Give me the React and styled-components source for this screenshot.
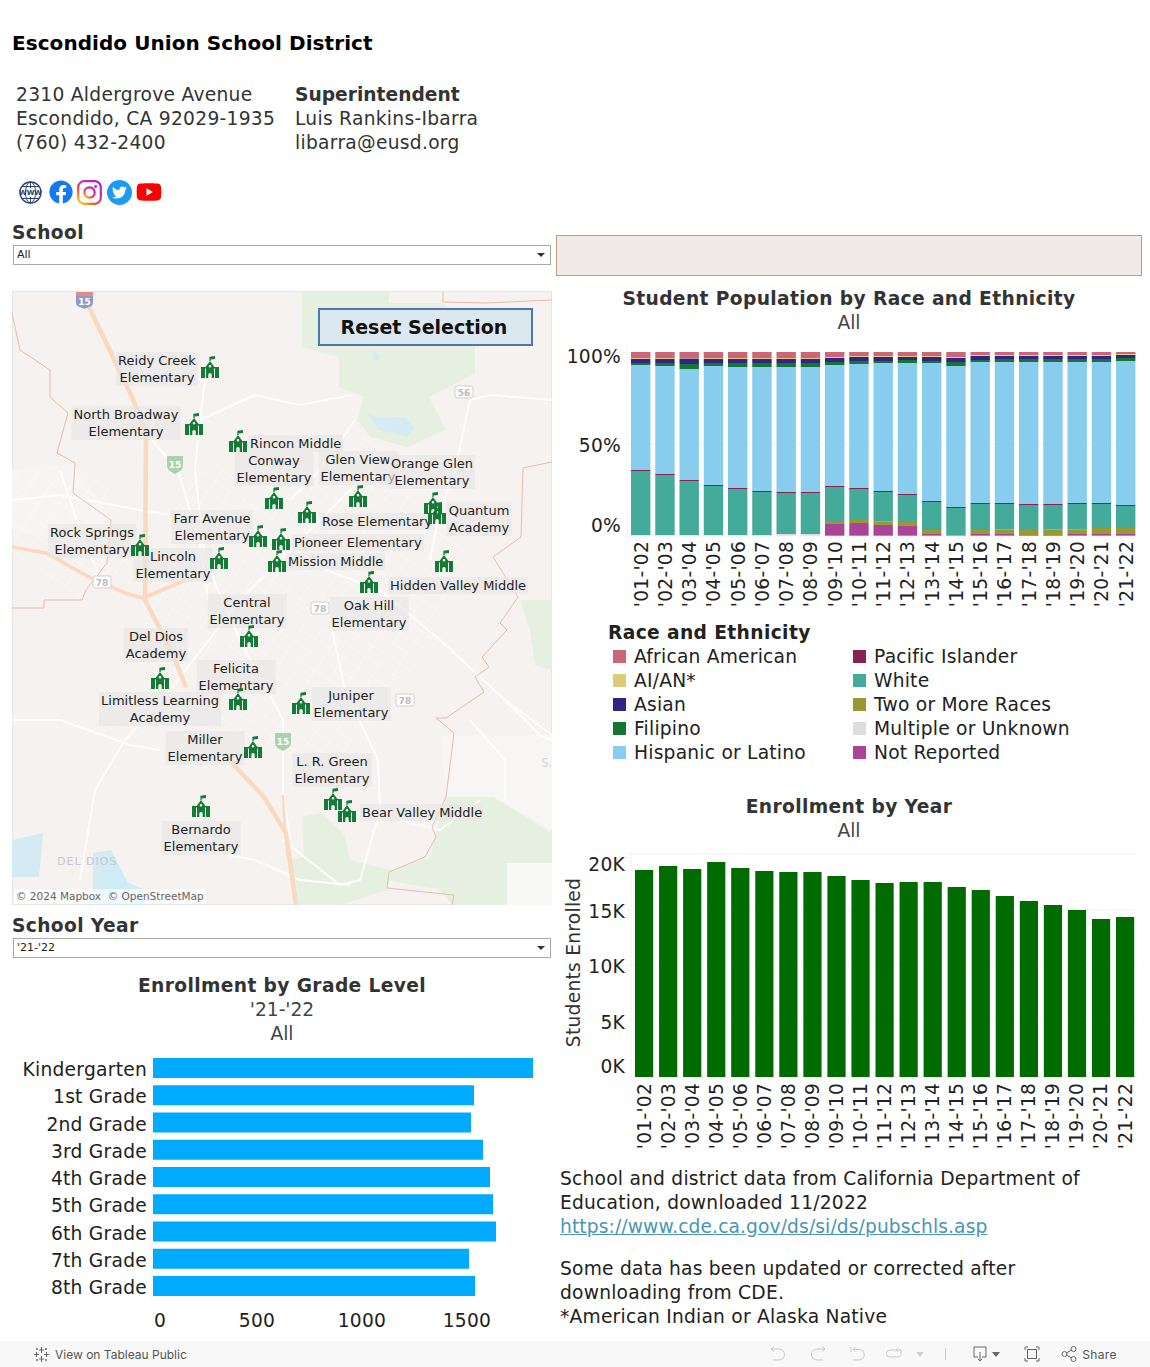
import React from "react";
import styled, { createGlobalStyle } from "styled-components";
import { FaFacebook, FaTwitter, FaYoutube } from "react-icons/fa";

const FONT = `"DejaVu Sans", Verdana, sans-serif`;

const GlobalStyle = createGlobalStyle`
  html, body { margin: 0; padding: 0; background: #fff; }
  body { font-family: ${FONT}; color: #222; }
`;

const Page = styled.div`
  width: 1150px;
  height: 1367px;
  overflow: hidden;
  display: flex;
  flex-direction: column;
`;

const Header = styled.header`
  flex: none;
  height: 220px;
  padding: 31px 12px 0;
  box-sizing: border-box;
`;

const DistrictName = styled.h1`
  margin: 0;
  font-size: 20px;
  line-height: 24px;
  letter-spacing: 0.06px;
  font-weight: 700;
  color: #000;
`;

const Contact = styled.div`
  display: flex;
  margin: 28px 0 -1px 4px;
  font-size: 18.67px;
  line-height: 24px;
  letter-spacing: 0.28px;
  color: #333;
`;

const ContactColumn = styled.div`
  width: ${(p) => p.$width || "auto"};
  b { font-weight: 700; letter-spacing: 0; }
`;

const SocialRow = styled.div`
  display: flex;
  align-items: center;
  gap: 4px;
  margin: 25px 0 0 7px;
  height: 26px;
`;

const RoundIcon = styled.span`
  width: 25px;
  height: 25px;
  border-radius: 50%;
  background: #1d9bf0;
  color: #fff;
  display: flex;
  align-items: center;
  justify-content: center;
  font-size: 15px;
`;

const Main = styled.main`
  flex: 1;
  min-height: 0;
  display: grid;
  grid-template-columns: 540px 586px;
  column-gap: 4px;
  padding-left: 12px;
  align-content: start;
`;

const Column = styled.section`
  display: flex;
  flex-direction: column;
`;

const FilterLabel = styled.div`
  font-size: 18.67px;
  line-height: 25px;
  letter-spacing: 0.36px;
  font-weight: 700;
  color: #333;
`;

const Select = styled.div`
  margin-left: 1px;
  width: 538px;
  height: 20px;
  box-sizing: border-box;
  border: 1px solid #aaa;
  display: flex;
  align-items: center;
  justify-content: space-between;
  padding: 0 5px 2px 3px;
  font-size: 11px;
  color: #222;
  &::after {
    content: "";
    margin-top: 2px;
    border-left: 4px solid transparent;
    border-right: 4px solid transparent;
    border-top: 4px solid #333;
  }
`;

const MapPane = styled.div`
  position: relative;
  margin-top: 26px;
  margin-bottom: 8px;
  width: 540px;
  height: 614px;
  overflow: hidden;
  background: #f5f2ef;
  box-shadow: inset 0 0 0 1px #e6e6e6;
`;

const MapArt = styled.svg`
  display: block;
`;

const ResetButton = styled.button`
  position: absolute;
  left: 306px;
  top: 17px;
  width: 215px;
  height: 38px;
  box-sizing: border-box;
  padding: 0 3px 0 0;
  background: #dce8ef;
  border: 2px solid #4e79a7;
  font-family: ${FONT};
  font-size: 19px;
  font-weight: 700;
  color: #111;
`;

const MapLabel = styled.div`
  position: absolute;
  left: ${(p) => p.$x}px;
  top: ${(p) => p.$y}px;
  transform: ${(p) => (p.$centered ? "translateX(-50%)" : "none")};
  padding: 0 2px;
  background: rgba(232, 230, 228, 0.6);
  font-size: 13px;
  line-height: 17px;
  color: #222;
  white-space: pre;
  text-align: center;
`;

const Pin = styled.svg`
  position: absolute;
  left: ${(p) => p.$x}px;
  top: ${(p) => p.$y}px;
`;

const Attribution = styled.div`
  position: absolute;
  left: 2px;
  bottom: 1px;
  padding: 0 2px;
  background: rgba(255, 255, 255, 0.65);
  font-size: 10.5px;
  line-height: 15px;
  color: #666;
`;

const ChartTitle = styled.h2`
  margin: ${(p) => p.$top || 0}px 0 0;
  padding-top: 1px;
  font-size: 18.67px;
  line-height: 23px;
  letter-spacing: 0.37px;
  font-weight: 700;
  color: #333;
  text-align: center;
`;

const ChartSub = styled.div`
  padding-top: 1px;
  font-size: 18.67px;
  line-height: 23px;
  color: #444;
  text-align: center;
`;

const Chart = styled.svg`
  display: block;
  flex: none;
  margin-top: ${(p) => p.$top || 0}px;
  font-family: ${FONT};
  text { letter-spacing: 0.25px; }
`;

const NoticeBox = styled.div`
  margin-top: 15px;
  height: 41px;
  box-sizing: border-box;
  background: #f0ebe8;
  border: 1px solid #bf9b82;
`;

const LegendTitle = styled.div`
  margin: 6px 0 0 52px;
  font-size: 18.67px;
  line-height: 23px;
  letter-spacing: 0.37px;
  font-weight: 700;
  color: #222;
`;

const LegendGrid = styled.div`
  display: grid;
  grid-template-rows: repeat(5, 24px);
  grid-template-columns: 240px 260px;
  grid-auto-flow: column;
  margin-left: 57px;
`;

const LegendItem = styled.div`
  display: flex;
  align-items: center;
  font-size: 18.67px;
  letter-spacing: 0.22px;
  color: #222;
  white-space: nowrap;
`;

const Swatch = styled.span`
  width: 13px;
  height: 13px;
  margin-right: ${(p) => p.$gap}px;
  background: ${(p) => p.$color};
`;

const Notes = styled.div`
  margin: 12px 0 0 4px;
  font-size: 18.67px;
  line-height: 24px;
  letter-spacing: 0.22px;
  color: #222;
  white-space: nowrap;
  p { margin: 0 0 18px; }
  a { color: #4a96b4; letter-spacing: 0.11px; }
`;

const Toolbar = styled.footer`
  flex: none;
  height: 26px;
  background: #f8f8f8;
  display: flex;
  align-items: center;
  justify-content: space-between;
  padding: 0 33px;
  font-family: Inter, "Open Sans", sans-serif;
  font-size: 12px;
  color: #555;
`;

const ToolGroup = styled.div`
  display: flex;
  align-items: center;
  gap: ${(p) => p.$gap ?? 6}px;
`;

const ToolSet = styled(ToolGroup)`
  letter-spacing: 0.4px;
  svg { display: block; }
`;

const Spacer = styled.span`
  width: ${(p) => p.$w}px;
`;

const YEARS = ["01", "02", "03", "04", "05", "06", "07", "08", "09", "10", "11", "12", "13", "14", "15", "16", "17", "18", "19", "20", "21"].map(
  (y) => `'${y}-'${String(+y + 1).padStart(2, "0")}`
);

const RACE_COLORS = ["#CC6677", "#DDCC77", "#332288", "#117733", "#88CCEE", "#882255", "#44AA99", "#999933", "#DDDDDD", "#AA4499"];

// lower edge of each stack segment, measured off the reference in 3x pixels from y=340
const RACE_EDGES = [
  [55, 57, 69, 75, 390, 393, 585, 585, 587, 587],
  [54, 57, 69, 78, 402, 405, 585, 585, 587, 587],
  [54, 56, 72, 87, 420, 423, 585, 585, 587, 587],
  [54, 57, 69, 78, 435, 438, 585, 585, 587, 587],
  [54, 57, 69, 81, 444, 447, 585, 585, 587, 587],
  [54, 57, 69, 81, 453, 456, 585, 585, 587, 587],
  [54, 57, 69, 81, 456, 459, 582, 582, 587, 587],
  [54, 57, 69, 81, 456, 459, 582, 582, 587, 587],
  [51, 54, 66, 75, 438, 441, 546, 552, 552, 587],
  [48, 51, 63, 72, 444, 447, 540, 549, 549, 587],
  [48, 51, 63, 69, 453, 456, 544, 555, 555, 587],
  [48, 51, 60, 69, 462, 465, 546, 558, 558, 587],
  [48, 51, 63, 69, 483, 486, 570, 582, 582, 587],
  [51, 54, 66, 78, 501, 504, 585, 587, 587, 587],
  [46, 48, 60, 66, 489, 492, 570, 582, 582, 587],
  [46, 48, 57, 66, 489, 492, 568, 582, 582, 587],
  [46, 48, 57, 66, 492, 495, 570, 585, 585, 587],
  [46, 48, 57, 66, 492, 495, 568, 585, 585, 587],
  [46, 48, 57, 66, 489, 492, 568, 582, 582, 587],
  [46, 48, 57, 66, 489, 492, 564, 582, 582, 587],
  [43, 45, 54, 63, 495, 498, 564, 582, 582, 587],
];

const ENROLL_TOPS = [90, 78, 87, 66, 84, 93, 96, 96, 108, 120, 129, 126, 126, 141, 150, 168, 183, 195, 210, 237, 231];

const LEGEND = [
  "African American", "AI/AN*", "Asian", "Filipino", "Hispanic or Latino",
  "Pacific Islander", "White", "Two or More Races", "Multiple or Unknown", "Not Reported",
];

const GRADES = [
  ["Kindergarten", 533], ["1st Grade", 474], ["2nd Grade", 471], ["3rd Grade", 483], ["4th Grade", 490],
  ["5th Grade", 493], ["6th Grade", 496], ["7th Grade", 469], ["8th Grade", 475],
];

// page coordinates; cx = centred label, lx = left edge of a one line label
const LABELS = [
  { text: "Reidy Creek\nElementary", cx: 157, y: 360 },
  { text: "North Broadway\nElementary", cx: 126, y: 414 },
  { text: "Rincon Middle", lx: 248, y: 443 },
  { text: "Conway\nElementary", cx: 274, y: 460 },
  { text: "Glen View\nElementary", cx: 358, y: 459 },
  { text: "Orange Glen\nElementary", cx: 432, y: 463 },
  { text: "Quantum\nAcademy", cx: 479, y: 510 },
  { text: "Farr Avenue\nElementary", cx: 212, y: 518 },
  { text: "Rose Elementary", lx: 320, y: 521 },
  { text: "Rock Springs\nElementary", cx: 92, y: 532 },
  { text: "Pioneer Elementary", lx: 292, y: 542 },
  { text: "Lincoln\nElementary", cx: 173, y: 556 },
  { text: "Mission Middle", lx: 286, y: 561 },
  { text: "Hidden Valley Middle", lx: 388, y: 585 },
  { text: "Central\nElementary", cx: 247, y: 602 },
  { text: "Oak Hill\nElementary", cx: 369, y: 605 },
  { text: "Del Dios\nAcademy", cx: 156, y: 636 },
  { text: "Felicita\nElementary", cx: 236, y: 668 },
  { text: "Limitless Learning\nAcademy", cx: 160, y: 700 },
  { text: "Juniper\nElementary", cx: 351, y: 695 },
  { text: "Miller\nElementary", cx: 205, y: 739 },
  { text: "L. R. Green\nElementary", cx: 332, y: 761 },
  { text: "Bear Valley Middle", lx: 360, y: 812 },
  { text: "Bernardo\nElementary", cx: 201, y: 829 },
];

const PINS = [
  [210, 367], [194, 424], [238, 441], [274, 498], [358, 496], [433, 503], [437, 513], [258, 536],
  [307, 512], [140, 545], [281, 539], [219, 558], [277, 561], [444, 561], [369, 582], [249, 636],
  [160, 678], [238, 699], [301, 703], [253, 747], [333, 799], [347, 811], [201, 806],
];

const SHIELDS = [[102, 582, "78"], [320, 608, "78"], [405, 700, "78"], [464, 392, "56"]];

const WHITE_ROADS = [
  "M146 433 L178 470 L200 545 L208 600",
  "M205 380 L200 420 L195 470 L205 560 L240 640 L283 720 L283 790 L290 840",
  "M12 500 L60 495 L140 510 L205 520 L300 560 L380 590 L440 640 L505 700 L552 735",
  "M380 460 L350 490 L300 540 L240 600 L170 690 L125 740 L95 790 L80 880",
  "M200 420 L255 395 L300 405 L352 395",
  "M552 400 L490 395 L470 400 L455 470 L440 510 L430 560",
  "M355 420 L320 470 L290 500",
  "M12 720 L60 720 L130 745 L160 750",
  "M283 840 L340 885 L360 880 L380 810 L378 760 L345 690 L330 620",
  "M200 850 L255 860 L300 880 L350 885",
  "M400 820 L440 830 L480 800",
  "M505 700 L540 735 L552 740",
  "M470 720 L505 760 L505 800",
  "M60 470 L85 545 L100 575",
];

const BORDERS = [
  "M12 313 L20 350 L50 370 L50 397 L68 413 L57 453 L75 463 L73 493 L111 520 L107 563 L86 590 L82 600 L44 600 L44 608 L12 608",
  "M443 292 L443 302 L486 303 L552 300",
  "M552 462 L523 468 L521 537 L493 557 L518 597 L500 623 L507 630 L482 657 L489 667 L475 677 L484 692 L446 718 L436 718 L454 733 L446 797 L432 827 L436 837 L425 857 L389 872 L387 888 L454 895 L452 905",
];

const GREENS = [
  "302,292 389,292 389,303 443,303 475,347 475,373 429,397 446,430 407,447 371,437 357,420 364,397 339,387 339,357 302,347",
  "493,797 552,833 552,863 507,863 507,905 453,905 440,890 387,880 391,870 430,858 437,830 447,797",
  "304,857 302,817 321,813 345,835 350,860 391,870 387,890 340,905 296,905 292,860",
  "520,600 552,600 552,670 535,665 530,630",
];

const WATER = [
  "368,413 378,418 404,417 414,427 407,437 379,430",
  "12,840 43,833 39,877 12,877",
  "93,853 111,850 128,883 146,890 146,905 93,905",
  "374,350 380,357 376,362 372,358",
];

const SchoolPin = ({ x, y }) => (
  <Pin $x={x - 9 - 12} $y={y - 11 - 291} width="18" height="22" viewBox="0 0 18 22" fill="#147a38">
    <path d="M8.4 0.8 L14 0 V3 L9.6 3.6 V5 H8.4 Z" />
    <path
      fillRule="evenodd"
      d="M0 11 H4.6 L9 5 L13.4 11 H18 V22 H0 Z M4 12.5 V22 H5 V12.5 Z M13 12.5 V22 H14 V12.5 Z M7.3 22 H10.7 V18.6 A1.7 1.7 0 0 0 7.3 18.6 Z M9 9 A1.3 1.3 0 1 0 9 11.6 A1.3 1.3 0 1 0 9 9 Z"
    />
  </Pin>
);

const Shield = ({ x, y, fill, text }) => (
  <g>
    <path d={`M${x - 8} ${y - 8} H${x + 8} V${y + 1} C${x + 8} ${y + 7} ${x + 3} ${y + 8} ${x} ${y + 10} C${x - 3} ${y + 8} ${x - 8} ${y + 7} ${x - 8} ${y + 1} Z`} fill={fill} />
    <text x={x} y={y + 4} textAnchor="middle" fontSize="9" fontWeight="700" fill="#fff" fontFamily={FONT}>{text}</text>
  </g>
);

const MapBackground = () => (
  <MapArt width="540" height="614" viewBox="12 291 540 614">
    <defs>
      <pattern id="streets" width="17" height="13" patternUnits="userSpaceOnUse" patternTransform="rotate(33)">
        <path d="M0 0 H17 M0 0 V13" stroke="#fff" strokeWidth="1.1" opacity="0.6" fill="none" />
      </pattern>
      <pattern id="suburb" width="14" height="16" patternUnits="userSpaceOnUse" patternTransform="rotate(-20)">
        <path d="M0 0 H14 M0 0 V16" stroke="#fff" strokeWidth="0.9" opacity="0.35" fill="none" />
      </pattern>
    </defs>
    <rect x="507" y="863" width="45" height="42" fill="#f9f9f8" />
    <polygon points="440,735 552,735 552,830 493,797 447,797" fill="#f7f6f4" />
    <polygon points="12,470 60,465 75,463 111,520 107,563 60,540 12,530" fill="#f7f5f3" />
    <polygon points="12,470 100,470 140,560 80,600 12,560" fill="url(#streets)" />
    <polygon points="190,470 400,430 470,560 430,650 340,760 250,740 170,700 140,600" fill="url(#streets)" />
    <polygon points="60,640 150,640 240,780 150,830 60,760" fill="url(#suburb)" />
    <polygon points="300,620 470,640 450,790 380,830 290,700" fill="url(#suburb)" />
    {GREENS.map((p) => <polygon key={p} points={p} fill="#e6f0e0" />)}
    {WATER.map((p) => <polygon key={p} points={p} fill="#d4ebf3" />)}
    <polygon points="100,860 114,858 132,890 108,890" fill="#cdecf7" />
    {WHITE_ROADS.map((d) => <path key={d} d={d} fill="none" stroke="#fff" strokeWidth="2" strokeLinejoin="round" opacity="0.85" />)}
    {BORDERS.map((d) => <path key={d} d={d} fill="none" stroke="#e6bda9" strokeWidth="1" />)}
    <path d="M89 307 L132 397 L146 433 L145 600 L157 623 L175 660 L186 687" fill="none" stroke="#fbd9c0" strokeWidth="4.5" />
    <path d="M231 762 L264 797 L286 833 L296 905" fill="none" stroke="#fbd9c0" strokeWidth="4.5" />
    <path d="M12 547 L46 553 L89 577 L125 593 L143 598 L186 580" fill="none" stroke="#fbd9c0" strokeWidth="3.6" />
    <path d="M283 795 L285 830 L288 860" fill="none" stroke="#fbd9c0" strokeWidth="2.4" />
    <path d="M76 294 H93 V303 C93 307 88 307 84.5 309 C81 307 76 307 76 303 Z" fill="#8e9bc7" />
    <rect x="76" y="292" width="17" height="4" fill="#e08a8a" />
    <text x="84.5" y="305" textAnchor="middle" fontSize="9" fontWeight="700" fill="#fff" fontFamily={FONT}>15</text>
    <Shield x={175} y={464} fill="#a9d3ac" text="15" />
    <Shield x={283} y={741} fill="#a9d3ac" text="15" />
    {SHIELDS.map(([x, y, t]) => (
      <g key={`${x}${y}`}>
        <rect x={x - 9} y={y - 6} width="18" height="12" rx="2" fill="#fff" stroke="#d3cfcb" />
        <text x={x} y={y + 3.5} textAnchor="middle" fontSize="9" fontWeight="700" fill="#bbb" fontFamily={FONT}>{t}</text>
      </g>
    ))}
    <text x="57" y="865" fontSize="11" letterSpacing="1" fill="#c7c6d3" fontFamily={FONT}>DEL DIOS</text>
    <text x="541" y="767" fontSize="12" fill="#d2d6df" fontFamily={FONT}>S.</text>
  </MapArt>
);

const TICK = "#222";

const RaceChart = () => (
  <Chart $top={6} width="586" height="275" viewBox="556 340 586 275">
    {[353, 444, 536].map((y) => <line key={y} x1="622" x2="1137" y1={y} y2={y} stroke="#f2f2f2" />)}
    <line x1="627" x2="627" y1="344" y2="537" stroke="#f2f2f2" />
    {[["100%", 363], ["50%", 452], ["0%", 532]].map(([t, y]) => (
      <text key={t} x="621" y={y} textAnchor="end" fontSize="18.67" fill={TICK}>{t}</text>
    ))}
    {RACE_EDGES.map((edges, i) => {
      const x = 631 + i * 24.25;
      let prev = 36;
      return (
        <g key={i}>
          {edges.map((edge, s) => {
            const rect = <rect key={s} x={x} y={340 + prev / 3} width="19.4" height={(edge - prev) / 3} fill={RACE_COLORS[s]} />;
            prev = edge;
            return rect;
          })}
          <text transform={`translate(${x + 16.5} 541) rotate(-90)`} textAnchor="end" fontSize="18.67" fill={TICK}>{YEARS[i]}</text>
        </g>
      );
    })}
  </Chart>
);

const EnrollmentChart = () => (
  <Chart $top={3} width="586" height="310" viewBox="556 845 586 310">
    {[854, 910, 965, 1021, 1077].map((y) => <line key={y} x1="628" x2="1137" y1={y} y2={y} stroke="#f2f2f2" />)}
    <line x1="631" x2="631" y1="852" y2="1080" stroke="#f2f2f2" />
    {[["20K", 871], ["15K", 918], ["10K", 973], ["5K", 1029], ["0K", 1073]].map(([t, y]) => (
      <text key={t} x="625" y={y} textAnchor="end" fontSize="18.67" fill={TICK}>{t}</text>
    ))}
    <text transform="translate(580 962.5) rotate(-90)" textAnchor="middle" fontSize="18.67" fill="#333">Students Enrolled</text>
    {ENROLL_TOPS.map((top, i) => {
      const x = 635 + i * 24.05;
      const y = 840 + top / 3;
      return (
        <g key={i}>
          <rect x={x} y={y} width="18.2" height={1077 - y} fill="#006c00" />
          <text transform={`translate(${x + 15.5} 1083) rotate(-90)`} textAnchor="end" fontSize="18.67" fill={TICK}>{YEARS[i]}</text>
        </g>
      );
    })}
  </Chart>
);

const GradeChart = () => (
  <Chart $top={5} width="540" height="285" viewBox="12 1050 540 285">
    <line x1="152" x2="152" y1="1054" y2="1300" stroke="#f2f2f2" />
    {GRADES.map(([name, right], i) => {
      const y = 1058 + i * 27.25;
      return (
        <g key={name}>
          <rect x="153" y={y} width={right - 153} height="20" fill="#00aaff" />
          <text x="147" y={y + 18} textAnchor="end" fontSize="18.67" fill={TICK}>{name}</text>
        </g>
      );
    })}
    {[["0", 160], ["500", 257], ["1000", 362], ["1500", 467]].map(([t, x]) => (
      <text key={t} x={x} y="1327" textAnchor="middle" fontSize="18.67" fill={TICK}>{t}</text>
    ))}
  </Chart>
);

const GlobeIcon = () => (
  <svg width="26" height="23" viewBox="0 0 26 23" fill="none" stroke="#2d4373" strokeWidth="1">
    <circle cx="11.5" cy="11.5" r="10.5" strokeWidth="1.3" />
    <ellipse cx="11.5" cy="11.5" rx="5" ry="10.5" />
    <path d="M3 5.5 H20 M3 17.5 H20 M11.5 1 V7 M11.5 16 V22" />
    <text x="11.5" y="14" textAnchor="middle" fontSize="7" fontWeight="700" fill="#2d4373" stroke="none" fontFamily={FONT}>WWW</text>
  </svg>
);

const InstagramIcon = () => (
  <svg width="26" height="25" viewBox="0 0 26 25" fill="none">
    <defs>
      <linearGradient id="ig" x1="0.1" y1="1" x2="0.9" y2="0">
        <stop offset="0" stopColor="#fdc70c" />
        <stop offset="0.35" stopColor="#f3463e" />
        <stop offset="0.65" stopColor="#d626a8" />
        <stop offset="1" stopColor="#a01fe8" />
      </linearGradient>
    </defs>
    <rect x="1.2" y="1.2" width="22.6" height="22.6" rx="6" stroke="url(#ig)" strokeWidth="2.2" />
    <circle cx="12.5" cy="12.5" r="5.2" stroke="url(#ig)" strokeWidth="2.2" />
    <circle cx="18.6" cy="6.4" r="1.5" fill="#d626a8" />
  </svg>
);

const Stroke = ({ children, width = 16, color = "#c9c9c9" }) => (
  <svg width={width} height="16" viewBox={`0 0 ${width} 16`} fill="none" stroke={color} strokeWidth="1">
    {children}
  </svg>
);

const Caret = ({ color }) => (
  <svg width="8" height="5" viewBox="0 0 8 5"><path d="M0 0 H8 L4 5 Z" fill={color} /></svg>
);

const TableauMark = () => (
  <svg width="17" height="17" viewBox="0 0 17 17" stroke="#666" strokeWidth="1" fill="none">
    <path d="M8.5 1 V7 M6 4 H11 M8.5 10 V16 M6 13 H11 M3.5 6 V11 M1 8.5 H6 M13.5 6 V11 M11 8.5 H16 M4 2 V4 M3 3 H5 M13 2 V4 M12 3 H14 M4 13 V15 M3 14 H5 M13 13 V15 M12 14 H14" />
  </svg>
);

const App = () => (
  <Page>
    <GlobalStyle />
    <Header>
      <DistrictName>Escondido Union School District</DistrictName>
      <Contact>
        <ContactColumn $width="279px">
          2310 Aldergrove Avenue<br />
          Escondido, CA 92029-1935<br />
          (760) 432-2400
        </ContactColumn>
        <ContactColumn>
          <b>Superintendent</b><br />
          Luis Rankins-Ibarra<br />
          libarra@eusd.org
        </ContactColumn>
      </Contact>
      <SocialRow>
        <GlobeIcon />
        <FaFacebook size={24} color="#1877f2" />
        <InstagramIcon />
        <RoundIcon><FaTwitter /></RoundIcon>
        <FaYoutube size={26} color="#fe0000" />
      </SocialRow>
    </Header>
    <Main>
      <Column>
        <FilterLabel>School</FilterLabel>
        <Select>All</Select>
        <MapPane>
          <MapBackground />
          <ResetButton>Reset Selection</ResetButton>
          {LABELS.map((l) => (
            <MapLabel key={l.text} $centered={l.cx != null} $x={(l.cx ?? l.lx) - 12} $y={l.y - 8 - 291}>{l.text}</MapLabel>
          ))}
          {PINS.map(([x, y]) => <SchoolPin key={`${x}-${y}`} x={x} y={y} />)}
          <Attribution>© 2024 Mapbox &nbsp;© OpenStreetMap</Attribution>
        </MapPane>
        <FilterLabel>School Year</FilterLabel>
        <Select>'21-'22</Select>
        <ChartTitle $top={15}>Enrollment by Grade Level</ChartTitle>
        <ChartSub>'21-'22</ChartSub>
        <ChartSub>All</ChartSub>
        <GradeChart />
      </Column>
      <Column>
        <NoticeBox />
        <ChartTitle $top={10}>Student Population by Race and Ethnicity</ChartTitle>
        <ChartSub>All</ChartSub>
        <RaceChart />
        <LegendTitle>Race and Ethnicity</LegendTitle>
        <LegendGrid>
          {LEGEND.map((name, i) => (
            <LegendItem key={name}>
              <Swatch $color={RACE_COLORS[i]} $gap={8} />
              {name}
            </LegendItem>
          ))}
        </LegendGrid>
        <ChartTitle $top={30}>Enrollment by Year</ChartTitle>
        <ChartSub>All</ChartSub>
        <EnrollmentChart />
        <Notes>
          <p>
            School and district data from California Department of<br />
            Education, downloaded 11/2022<br />
            <a href="https://www.cde.ca.gov/ds/si/ds/pubschls.asp">https://www.cde.ca.gov/ds/si/ds/pubschls.asp</a>
          </p>
          <p>
            Some data has been updated or corrected after<br />
            downloading from CDE.<br />
            *American Indian or Alaska Native
          </p>
        </Notes>
      </Column>
    </Main>
    <Toolbar>
      <ToolGroup $gap={5}>
        <TableauMark />
        View on Tableau Public
      </ToolGroup>
      <ToolSet $gap={0}>
        <Stroke><path d="M1 3 H9 A5.5 5.5 0 0 1 9 14 H3 M1 3 L4 0.5 M1 3 L4 5.5" /></Stroke>
        <Spacer $w={24} />
        <Stroke><path d="M15 3 H7 A5.5 5.5 0 0 0 7 14 H13 M15 3 L12 0.5 M15 3 L12 5.5" /></Stroke>
        <Spacer $w={24} />
        <Stroke><path d="M1 1 V6 M3 3.5 H9 A5 5 0 0 1 9 14 H3 M3 3.5 L5.5 1.5 M3 3.5 L5.5 5.5" /></Stroke>
        <Spacer $w={20} />
        <Stroke><path d="M10 4 H4 A3.5 3.5 0 0 0 4 11 H12 A3.5 3.5 0 0 0 15 7 V4 H11 M12 2 L10 4 L12 6" /></Stroke>
        <Spacer $w={14} />
        <Caret color="#d0d0d0" />
        <Spacer $w={21} />
        <Stroke width={1}><path d="M0.5 2 V14" /></Stroke>
        <Spacer $w={26} />
        <Stroke color="#666"><path d="M2 1 H14 V11 H10 M6 11 H2 V1 M8 6 V15 M6 13 L8 15 L10 13" /></Stroke>
        <Spacer $w={4} />
        <Caret color="#666" />
        <Spacer $w={24} />
        <Stroke color="#666"><path d="M1 4 V1 H4 M12 1 H15 V4 M15 12 V15 H12 M4 15 H1 V12" /><rect x="3.5" y="3.5" width="9" height="9" /></Stroke>
        <Spacer $w={21} />
        <Stroke color="#666"><circle cx="3.5" cy="8" r="2.5" /><circle cx="12.5" cy="3" r="2.5" /><circle cx="12.5" cy="13" r="2.5" /><path d="M5.7 6.8 L10.3 4.2 M5.7 9.2 L10.3 11.8" /></Stroke>
        <Spacer $w={5} />
        Share
      </ToolSet>
    </Toolbar>
  </Page>
);

export default App;
